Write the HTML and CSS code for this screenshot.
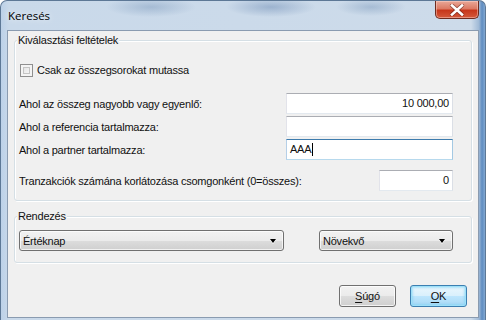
FILE: index.html
```html
<!DOCTYPE html>
<html lang="hu">
<head>
<meta charset="utf-8">
<title>Keresés</title>
<link rel="stylesheet" href="styles.css">
</head>
<body>
<div class="window">
  <div class="titlebar">
    <span class="title">Keresés</span>
    <div class="close">
      <svg width="16" height="12" viewBox="0 0 16 12">
        <path d="M3 1.5 L13 10.5 M13 1.5 L3 10.5" stroke="#5a1a10" stroke-width="4.2" stroke-linecap="round" fill="none" opacity="0.55"/>
        <path d="M3 1.5 L13 10.5 M13 1.5 L3 10.5" stroke="#ffffff" stroke-width="2.6" stroke-linecap="square" fill="none"/>
      </svg>
    </div>
  </div>
  <div class="client">
    <div class="group group-criteria">
      <div class="group-title">Kiválasztási feltételek</div>
      <label class="check-row"><span class="checkbox"></span><span>Csak az összegsorokat mutassa</span></label>
      <div class="field-row first">
        <span>Ahol az összeg nagyobb vagy egyenlő:</span>
        <div class="textbox wide right">10 000,00</div>
      </div>
      <div class="field-row">
        <span>Ahol a referencia tartalmazza:</span>
        <div class="textbox wide"></div>
      </div>
      <div class="field-row">
        <span>Ahol a partner tartalmazza:</span>
        <div class="textbox wide focused">AAA<span class="caret"></span></div>
      </div>
      <div class="field-row last">
        <span>Tranzakciók számána korlátozása csomgonként (0=összes):</span>
        <div class="textbox narrow right">0</div>
      </div>
    </div>
    <div class="group group-sort">
      <div class="group-title">Rendezés</div>
      <div class="combo-row">
        <div class="combo combo-field"><span>Értéknap</span><span class="arrow"></span></div>
        <div class="combo combo-order"><span>Növekvő</span><span class="arrow"></span></div>
      </div>
    </div>
    <div class="buttons">
      <div class="button"><u>S</u>úgó</div>
      <div class="button default"><u>O</u>K</div>
    </div>
  </div>
</div>
</body>
</html>
```
FILE: styles.css
```css
html, body {
  margin: 0;
  padding: 0;
}
body {
  width: 486px;
  height: 320px;
  overflow: hidden;
  font-family: "Liberation Sans", Arial, sans-serif;
  font-size: 11px;
  letter-spacing: -0.22px;
  color: #111;
}
.window {
  box-sizing: border-box;
  width: 486px;
  height: 320px;
  display: flex;
  flex-direction: column;
  border: 1px solid #5d7896;
  border-bottom: none;
  border-radius: 7px 7px 0 0;
  background:
    radial-gradient(ellipse 45px 10px at 150px 6px, rgba(120,150,185,0.45), rgba(120,150,185,0) 100%),
    radial-gradient(ellipse 45px 10px at 270px 6px, rgba(110,140,180,0.5), rgba(110,140,180,0) 100%),
    radial-gradient(ellipse 35px 9px at 370px 6px, rgba(120,150,185,0.45), rgba(120,150,185,0) 100%),
    linear-gradient(90deg, #bcd1e8 0px, #c9d9ea 8px, #cddbea 470px, #9fb9d6 478px, #5f8cc0 481px, #8fb2d8 485px);
}
.titlebar {
  height: 29px;
  display: flex;
  align-items: flex-start;
  flex: none;
}
.title {
  font-family: "Open Sans", "DejaVu Sans", sans-serif;
  font-size: 11.5px;
  letter-spacing: 0;
  line-height: 16px;
  margin: 7px 0 0 7px;
  color: #000;
  text-shadow: 0 0 6px rgba(255,255,255,0.9);
}
.close {
  margin-left: auto;
  margin-right: 6px;
  width: 44px;
  height: 18px;
  box-sizing: border-box;
  border: 1px solid #6e2c20;
  border-top: none;
  border-radius: 0 0 5px 5px;
  background: linear-gradient(#e9a898 0%, #dc7a64 45%, #c7371b 55%, #d4593b 100%);
  box-shadow: inset 0 0 0 1px rgba(255,220,210,0.45);
  display: flex;
  align-items: center;
  justify-content: center;
}
.close svg {
  display: block;
}
.client {
  flex: 1;
  margin: 0 6px 2px 6px;
  background: #f0f0f0;
  border: 1px solid #8a9bb0;
  padding: 0 6px;
  display: flex;
  flex-direction: column;
}
.group {
  border: 1px solid #d5dfe5;
  border-radius: 3px;
  box-shadow: inset 1px 1px 0 #fff, 1px 1px 0 #fff;
  padding: 0 18px 0 4px;
  display: flex;
  flex-direction: column;
}
.group-criteria {
  margin-top: 9px;
  padding-bottom: 9px;
}
.group-sort {
  margin-top: 15px;
  padding-bottom: 11px;
}
.group-title {
  margin-top: -7px;
  margin-left: -2px;
  padding: 0 1px;
  line-height: 13px;
  background: #f0f0f0;
  width: max-content;
}
.check-row {
  display: flex;
  align-items: center;
  gap: 4px;
  margin-top: 17px;
  margin-left: 1px;
  line-height: 13px;
}
.checkbox {
  box-sizing: border-box;
  width: 13px;
  height: 13px;
  border: 1px solid #8f8f8f;
  background: linear-gradient(135deg, #dcdcdc, #fefefe);
  box-shadow: inset 0 0 0 2px #f4f4f4, inset 0 0 0 3px #c4c4c4;
}
.field-row {
  display: flex;
  justify-content: space-between;
  align-items: center;
  margin-top: 2px;
}
.field-row.first {
  margin-top: 16px;
}
.field-row.last {
  margin-top: 10px;
}
.textbox {
  box-sizing: border-box;
  height: 21px;
  line-height: 19px;
  background: #fff;
  border: 1px solid;
  border-color: #abadb3 #dbdfe6 #e3e9ef #e2e3ea;
  padding: 0 3px;
  display: flex;
  align-items: center;
}
.textbox.wide {
  width: 167px;
}
.textbox.narrow {
  width: 74px;
}
.textbox.right {
  justify-content: flex-end;
}
.textbox.focused {
  border-color: #3d7bad #a4c9e3 #b7d9ed #b5cfe7;
}
.caret {
  width: 1px;
  height: 13px;
  background: #000;
  margin-left: 1px;
}
.combo-row {
  display: flex;
  justify-content: space-between;
  margin-top: 7px;
}
.combo {
  box-sizing: border-box;
  height: 21px;
  border: 1px solid #707070;
  border-radius: 3px;
  background: linear-gradient(#f2f2f2 0%, #ebebeb 50%, #dddddd 50%, #cfcfcf 100%);
  box-shadow: inset 0 0 0 1px rgba(255,255,255,0.7);
  display: flex;
  align-items: center;
  justify-content: space-between;
  padding: 0 7px 0 3px;
}
.combo-field {
  width: 265px;
}
.combo-order {
  width: 134px;
}
.arrow {
  width: 0;
  height: 0;
  border-left: 3.5px solid transparent;
  border-right: 3.5px solid transparent;
  border-top: 4px solid #000;
  filter: drop-shadow(0 1px 0 #fff);
}
.buttons {
  display: flex;
  justify-content: flex-end;
  gap: 14px;
  margin-top: 22px;
  margin-right: 5px;
}
.button {
  box-sizing: border-box;
  width: 57px;
  height: 22px;
  border: 1px solid #707070;
  border-radius: 3px;
  background: linear-gradient(#f2f2f2 0%, #ebebeb 50%, #dddddd 50%, #cfcfcf 100%);
  box-shadow: inset 0 0 0 1px rgba(255,255,255,0.75);
  display: flex;
  align-items: center;
  justify-content: center;
  line-height: 13px;
}
.button.default {
  border-color: #3c7fb1;
  background: linear-gradient(#eaf6fd 0%, #d9f0fc 50%, #bee6fd 50%, #a7d9f5 100%);
  box-shadow: inset 0 0 0 1px #9ee0f8, inset 0 0 2px 2px rgba(120,210,245,0.5);
}
u {
  text-decoration-thickness: 1px;
  text-underline-offset: 2px;
}
```
